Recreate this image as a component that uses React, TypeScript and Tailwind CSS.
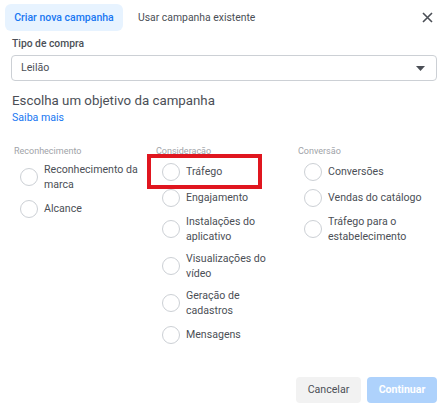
import React from "react";

const Radio = ({ lines }: { lines: string[] }) => (
  <div className="flex items-center gap-[6px] min-h-[19px]">
    <div className="w-[18px] h-[18px] shrink-0 rounded-full border border-[#ccd0d5] bg-white" />
    <div className="text-[10.6px] leading-[15px] text-[#4b4f56]">
      {lines.map((l, i) => (
        <div key={i}>{l}</div>
      ))}
    </div>
  </div>
);

const Column = ({ title, items }: { title: string; items: string[][] }) => (
  <div className="w-[142px] flex flex-col">
    <div className="text-[9px] leading-[12px] text-[#a0a3a8] h-[12px]">{title}</div>
    <div className="flex flex-col gap-[7px] pl-[6px] mt-[5px]">
      {items.map((it, i) => (
        <Radio key={i} lines={it} />
      ))}
    </div>
  </div>
);

export default function App() {
  return (
    <div
      className="w-[447px] h-[412px] bg-white relative flex flex-col"
      style={{ fontFamily: "Roboto, 'Liberation Sans', sans-serif" }}
    >
      <div className="flex items-center pt-[4px] pl-[5px] pr-[14px]">
        <div className="h-[27px] w-[118px] rounded-[6px] bg-[#e7f3ff] text-[#1877f2] font-medium text-[10.5px] flex items-center justify-center">
          Criar nova campanha
        </div>
        <div className="ml-[15px] text-[10.4px] text-[#4b4f56] flex-1">Usar campanha existente</div>
        <svg width="11" height="11" viewBox="0 0 11 11">
          <path d="M1 1 L10 10 M10 1 L1 10" stroke="#4b4f56" strokeWidth="1.6" />
        </svg>
      </div>

      <div className="px-[11px]">
        <div className="mt-[6px] pl-[1px] text-[10.3px] leading-[14px] font-medium text-[#4b4f56]">Tipo de compra</div>
        <div className="mt-[4px] h-[26px] w-[426px] border border-[#ccd0d5] rounded-[4px] flex items-center pl-[9px] pr-[11px]">
          <span className="text-[10.6px] text-[#4b4f56] flex-1">Leilão</span>
          <svg width="9" height="5" viewBox="0 0 9 5">
            <path d="M0 0 L9 0 L4.5 5 Z" fill="#4b4f56" />
          </svg>
        </div>
        <div className="mt-[11px] pl-[1px] text-[13.3px] leading-[18px] text-[#4b4f56]">Escolha um objetivo da campanha</div>
        <div className="mt-[1px] pl-[1px] text-[10.6px] leading-[14px] text-[#1877f2]">Saiba mais</div>
      </div>

      <div className="flex pl-[14px] mt-[20px]">
        <Column title="Reconhecimento" items={[["Reconhecimento da", "marca"], ["Alcance"]]} />
        <div className="relative">
          <Column
            title="Consideração"
            items={[
              ["Tráfego"],
              ["Engajamento"],
              ["Instalações do", "aplicativo"],
              ["Visualizações do", "vídeo"],
              ["Geração de", "cadastros"],
              ["Mensagens"],
            ]}
          />
          <div className="absolute left-[-9px] top-[9px] w-[115px] h-[35px] border-[4px] border-[#e0161f]" />
        </div>
        <Column
          title="Conversão"
          items={[["Conversões"], ["Vendas do catálogo"], ["Tráfego para o", "estabelecimento"]]}
        />
      </div>

      <div className="flex-1" />
      <div className="flex justify-end gap-[6px] pr-[10px] pb-[9px]">
        <button className="h-[26px] w-[65px] rounded-[4px] bg-[#f2f2f2] text-[10.6px] text-[#4b4f56]">Cancelar</button>
        <button className="h-[26px] w-[70px] rounded-[4px] bg-[#aed2fc] text-[10.6px] font-bold text-white">Continuar</button>
      </div>
    </div>
  );
}
